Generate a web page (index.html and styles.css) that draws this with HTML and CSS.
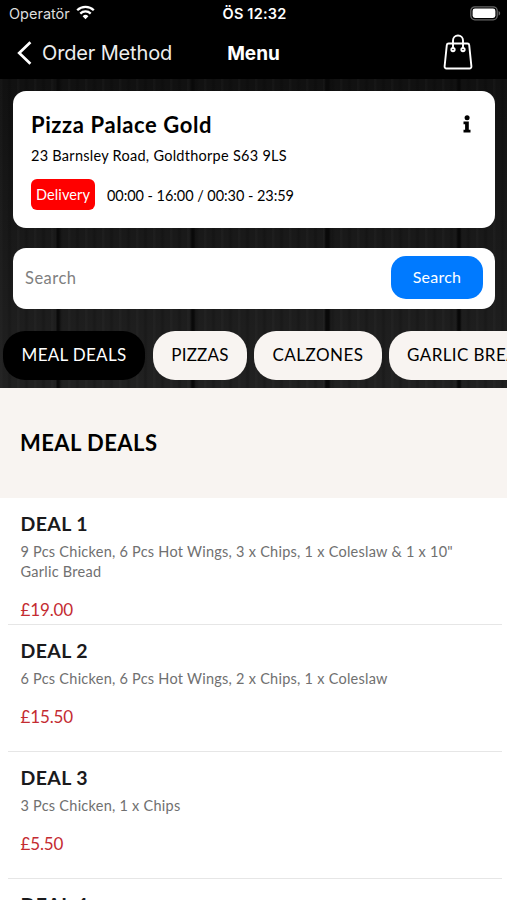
FILE: index.html
```
<!DOCTYPE html>
<html lang="en">
<head>
  <meta charset="utf-8">
  <title>Menu</title>
  <link rel="stylesheet" href="styles.css">
</head>
<body>
  <header class="top">
    <div class="status-bar">
      <div class="carrier">
        <span>Operatör</span>
        <svg class="wifi" width="19" height="15" viewBox="0 0 19 15" fill="none" stroke="#fff" stroke-width="2.3">
          <path d="M1.2 5.3a11.8 11.8 0 0 1 16.6 0"/>
          <path d="M4.3 8.6a7.4 7.4 0 0 1 10.4 0"/>
          <path d="M9.5 14.2 6.6 11.2a4.1 4.1 0 0 1 5.8 0z" fill="#fff" stroke="none"/>
        </svg>
      </div>
      <span class="clock">ÖS 12:32</span>
      <svg class="battery" width="31" height="15" viewBox="0 0 31 15">
        <rect x="0.8" y="0.8" width="26.4" height="13" rx="4" fill="none" stroke="#666" stroke-width="1.3"/>
        <rect x="2.6" y="2.6" width="22.8" height="9.4" rx="2.4" fill="#fff"/>
        <path d="M28.6 5v4.6c2.1-.8 2.1-3.8 0-4.6z" fill="#666"/>
      </svg>
    </div>
    <nav class="nav-bar">
      <a class="back">
        <svg width="15" height="24" viewBox="0 0 15 24" fill="none" stroke="#fff" stroke-width="2.7">
          <path d="M13.4 1.2 2.2 12l11.2 10.8"/>
        </svg>
        <span>Order Method</span>
      </a>
      <span class="nav-title">Menu</span>
      <svg class="bag" width="30" height="36" viewBox="0 0 30 36" fill="none" stroke="#fff" stroke-width="1.9">
        <path d="M5.6 9.5h18.8a1.8 1.8 0 0 1 1.8 1.6l2.2 21.3a1.9 1.9 0 0 1-1.9 2.1h-23a1.9 1.9 0 0 1-1.9-2.1l2.2-21.3a1.8 1.8 0 0 1 1.8-1.6z"/>
        <path d="M10 15V6.500a5 5 0 0 1 10 0V15"/>
        <circle cx="10" cy="15.600" r="1.700"/>
        <circle cx="20" cy="15.600" r="1.700"/>
      </svg>
    </nav>
  </header>

  <section class="hero">
    <div class="store-card">
      <div class="store-head">
        <h1>Pizza Palace Gold</h1>
        <svg class="info" width="8" height="18" viewBox="0 0 8 18">
          <circle cx="4.100" cy="2.700" r="2.500"/>
          <path d="M.5 6.600h5.300v8.200h1.700v2.600H.5v-2.600h1.600V9.200H.5z"/>
        </svg>
      </div>
      <p class="address">23 Barnsley Road, Goldthorpe S63 9LS</p>
      <div class="hours-row">
        <span class="tag">Delivery</span>
        <span class="hours">00:00 - 16:00 / 00:30 - 23:59</span>
      </div>
    </div>

    <form class="search">
      <input type="text" placeholder="Search">
      <button type="button">Search</button>
    </form>

    <div class="tabs">
      <a class="tab active"><span>MEAL DEALS</span></a>
      <a class="tab tab-pizzas"><span>PIZZAS</span></a>
      <a class="tab tab-calzones"><span>CALZONES</span></a>
      <a class="tab tab-garlic"><span>GARLIC BREADS</span></a>
    </div>
  </section>

  <h2 class="category">MEAL DEALS</h2>

  <ul class="items">
    <li>
      <h3>DEAL 1</h3>
      <p class="desc">9 Pcs Chicken, 6 Pcs Hot Wings, 3 x Chips, 1 x Coleslaw &amp; 1 x 10" <br>Garlic Bread</p>
      <p class="price">£19.00</p>
    </li>
    <li>
      <h3>DEAL 2</h3>
      <p class="desc">6 Pcs Chicken, 6 Pcs Hot Wings, 2 x Chips, 1 x Coleslaw</p>
      <p class="price">£15.50</p>
    </li>
    <li>
      <h3>DEAL 3</h3>
      <p class="desc">3 Pcs Chicken, 1 x Chips</p>
      <p class="price">£5.50</p>
    </li>
    <li>
      <h3>DEAL 4</h3>
    </li>
  </ul>
</body>
</html>
```

FILE: styles.css
```
* {
  box-sizing: border-box;
}

body {
  margin: 0;
  height: 900px;
  overflow: hidden;
  font-family: Lato, "Liberation Sans", sans-serif;
  background-color: #fff;
  color: #000;
}

h1, h2, h3, p, ul {
  margin: 0;
  padding: 0;
}

/* Status bar and navigation */
.top {
  height: 79px;
  background-color: #000;
  color: #fff;
  font-family: Inter, sans-serif;
}

.status-bar {
  display: grid;
  grid-template-columns: 1fr auto 1fr;
  align-items: center;
  height: 27px;
  padding: 0 7px 0 9px;
}

.carrier {
  display: flex;
  align-items: center;
  gap: 6px;
  font-size: 14.5px;
  color: #ddd;
}

.wifi {
  margin-top: -2px;
}

.clock {
  font-size: 14.5px;
  font-weight: 600;
  letter-spacing: 0.2px;
}

.battery {
  justify-self: end;
  margin-right: -1px;
}

.nav-bar {
  display: grid;
  grid-template-columns: 1fr auto 1fr;
  align-items: center;
  height: 52px;
  padding: 0 17px;
}

.back {
  display: flex;
  align-items: center;
  gap: 10px;
  margin-top: -1px;
  font-size: 20px;
  letter-spacing: -0.15px;
  color: #eee;
}

.nav-title {
  font-size: 19px;
  font-weight: 700;
}

.bag {
  justify-self: end;
  margin: -2px 17px 0 0;
}

/* Dark wooden background */
.hero {
  height: 309px;
  padding-top: 12px;
  overflow: hidden;
  background-color: #181818;
  background-image:
    linear-gradient(90deg, transparent 56px, #0a0a0a 57px, #0a0a0a 59px, transparent 61px, transparent 190px, #090909 192px, #0a0a0a 194px, transparent 196px, transparent 324px, #090909 326px, #090909 329px, transparent 331px, transparent 456px, #080808 458px, #080808 460px, transparent 462px),
    repeating-linear-gradient(90deg, rgba(255, 255, 255, 0.02) 0 2px, transparent 3px 7px, rgba(0, 0, 0, 0.15) 9px 10px, transparent 12px 17px),
    linear-gradient(rgba(0, 0, 0, 0.3), rgba(255, 255, 255, 0.04));
}

.store-card {
  height: 137px;
  margin: 0 12px 0 13px;
  padding: 18px 24px 0 18px;
  border-radius: 13px;
  background-color: #fff;
}

.store-head {
  display: flex;
  justify-content: space-between;
  align-items: center;
  height: 30px;
}

.store-head h1 {
  font-size: 22px;
  font-weight: 700;
  letter-spacing: 0.6px;
}

.address {
  margin-top: 7px;
  font-size: 14.5px;
  line-height: 20px;
  letter-spacing: 0.27px;
}

.hours-row {
  display: flex;
  align-items: center;
  gap: 12px;
  margin-top: 13px;
}

.tag {
  width: 64px;
  height: 31px;
  border-radius: 6px;
  background-color: #ff0000;
  color: #fff;
  font-size: 14.5px;
  line-height: 31px;
  letter-spacing: 0.1px;
  text-align: center;
}

.hours {
  padding-top: 2px;
  font-size: 14.5px;
  letter-spacing: -0.06px;
}

.search {
  display: flex;
  align-items: center;
  height: 61px;
  margin: 20px 12px 0 13px;
  padding: 0 12px;
  border-radius: 13px;
  background-color: #fff;
}

.search input {
  flex: 1;
  min-width: 0;
  padding: 0 0 2px;
  border: none;
  outline: none;
  background: none;
  font-family: inherit;
  font-size: 16.5px;
  letter-spacing: 0.5px;
}

.search input::placeholder {
  color: #808080;
}

.search button {
  width: 92px;
  height: 43px;
  margin-top: -2px;
  padding: 0 0 3px;
  border: none;
  border-radius: 15px;
  background-color: #007aff;
  color: #fff;
  font-family: inherit;
  font-size: 16px;
  letter-spacing: 0.25px;
}

.tabs {
  display: flex;
  gap: 7px;
  margin-top: 22px;
  padding-left: 3px;
}

.tab {
  flex: none;
  width: 142px;
  height: 49px;
  border-radius: 22px;
  background-color: #f8f4f1;
  font-size: 17px;
  line-height: 48px;
  letter-spacing: 0.3px;
  text-align: center;
}

.tab.active {
  margin-right: 1px;
  background-color: #000;
  color: #fff;
}

.tab-pizzas {
  width: 94px;
  letter-spacing: 0.2px;
}

.tab-calzones {
  width: 128px;
  letter-spacing: 0.5px;
}

.tab-garlic {
  width: 170px;
  letter-spacing: 0.4px;
}

/* Menu list */
.category {
  height: 110px;
  padding-left: 20px;
  background-color: #f8f4f1;
  font-size: 22px;
  font-weight: 700;
  line-height: 110px;
  letter-spacing: 0.45px;
}

.items {
  list-style: none;
}

.items li {
  height: 127px;
  margin: 0 5px 0 8px;
  padding: 13px 0 0 12.5px;
  border-bottom: 1px solid #e6e6e6;
}

.items h3 {
  font-size: 19.5px;
  font-weight: 700;
  line-height: 26px;
  letter-spacing: 0.4px;
  color: #1a1a1c;
}

.desc {
  margin-top: 5px;
  font-size: 14.5px;
  line-height: 20px;
  letter-spacing: 0.25px;
  color: #707070;
}

.price {
  margin-top: 17px;
  font-size: 17px;
  line-height: 22px;
  letter-spacing: -0.15px;
  color: #c42b31;
}
```
